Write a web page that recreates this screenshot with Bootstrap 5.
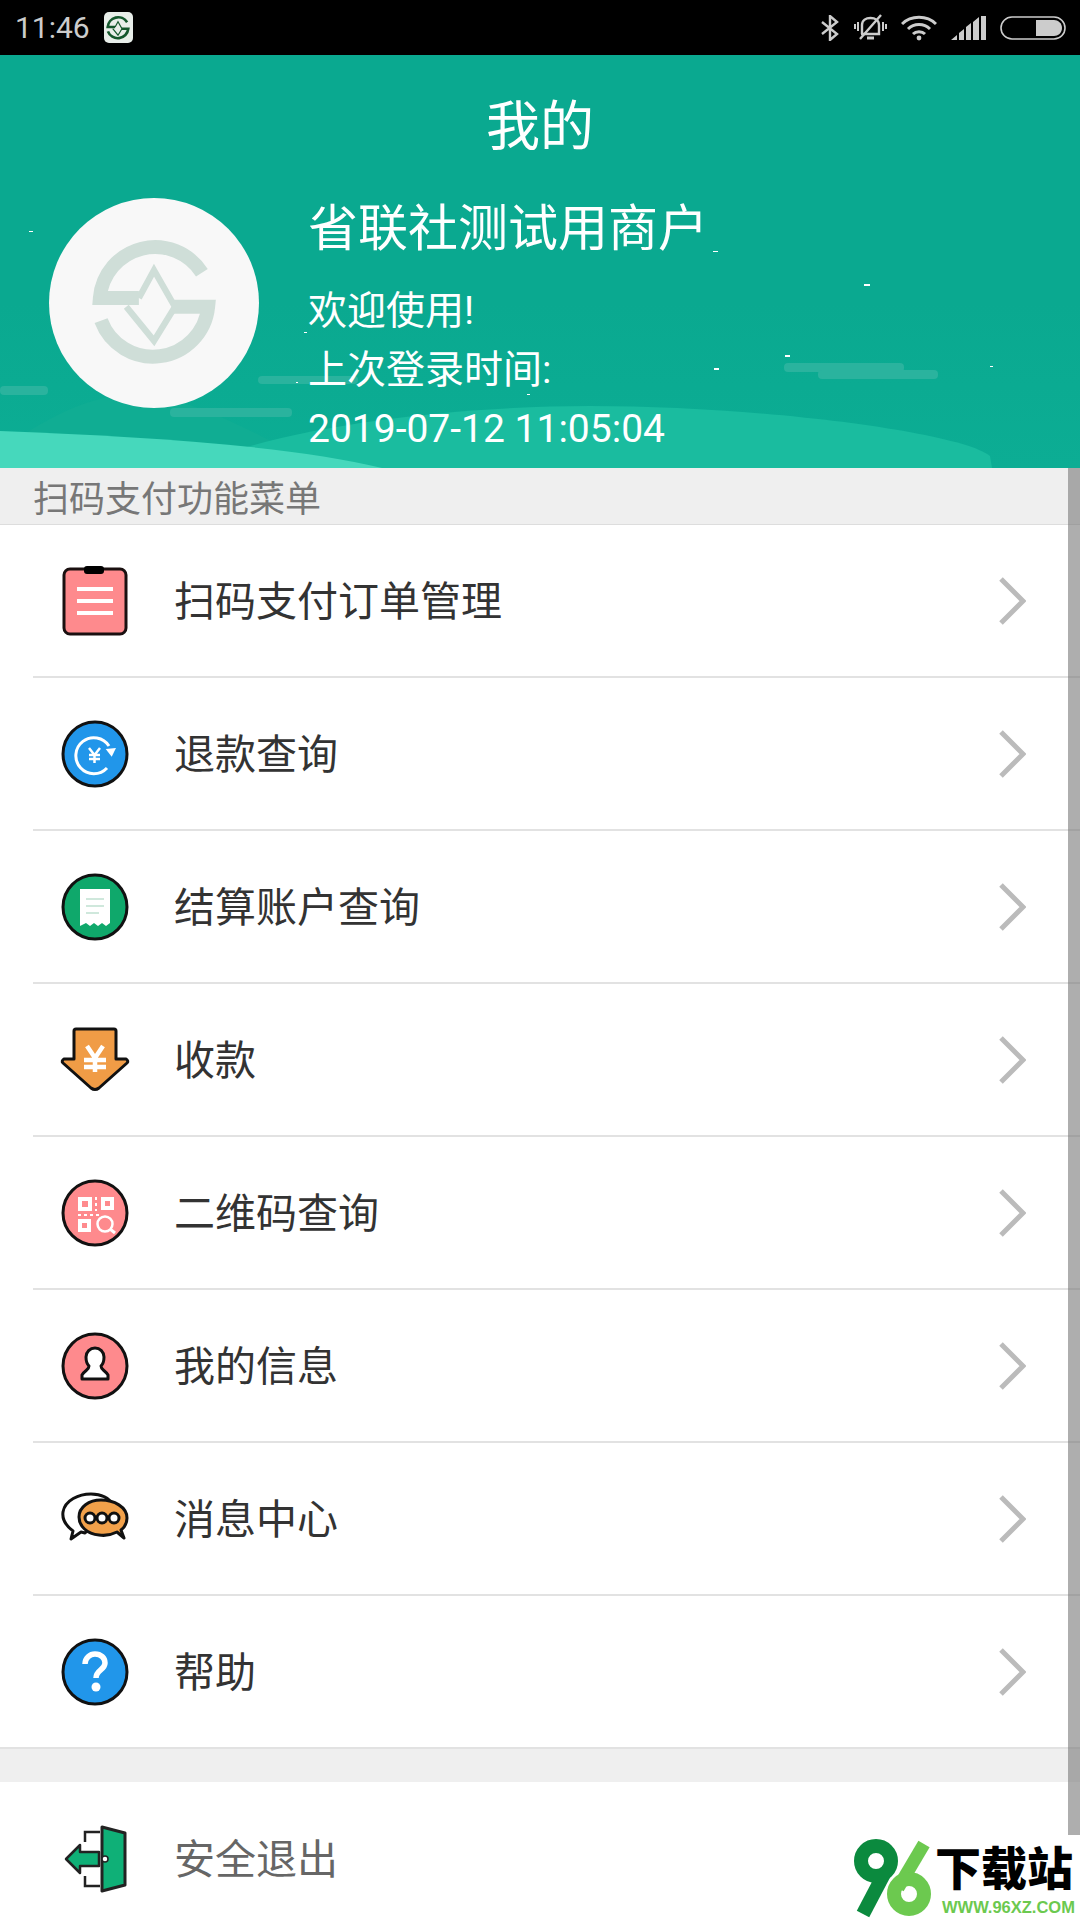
<!DOCTYPE html>
<html lang="zh-CN">
<head>
<meta charset="utf-8">
<title>我的</title>
<link rel="stylesheet" href="https://cdn.jsdelivr.net/npm/bootstrap@5.3.0/dist/css/bootstrap.min.css">
<style>
html,body{margin:0;height:1920px;overflow:hidden;background:#fff}
body{font-family:Roboto,"Noto Sans CJK SC",sans-serif;position:relative}
.status-strip{height:55px;background:#000;color:#ccc;font-size:30px;line-height:1;padding:0 14px 0 15px}
.status-strip svg{display:block}
.app-chip{width:29px;height:31px;background:#e8eee9;border-radius:5px;margin-left:14px}
.status-icons{gap:14px}
.hero{height:413px;position:relative;overflow:hidden;background:linear-gradient(#0aa990,#0aa990 60%,#0cad94);color:#fff}
.hero-art{position:absolute;left:0;top:0}
.hero-inner{position:relative}
.hero-title{font-size:54px;line-height:72px;padding-top:37px;text-align:center}
.hero-body{padding:31px 0 0 49px;gap:49px}
.avatar-disc{width:210px;height:210px;background:#f8f8f8;border-radius:50%;margin-top:3px;flex:none}
.hero-name{font-size:50px;line-height:68px;margin-bottom:19px}
.hero-line{font-size:39px;line-height:59px}
.menu-head{height:57px;background:#efefef;border-bottom:1px solid #ddd;color:#777;font-size:36px;line-height:50px;padding:7px 0 0 33px}
.menu-list{--bs-list-group-border-width:0;border-radius:0}
.menu-item{padding:0 0 0 33px;background:#fff}
.menu-row{height:153px;border-bottom:2px solid #e2e2e2;padding:0 54px 0 22px;gap:39px;color:#333;font-size:41px}
.menu-row span{padding-top:5px}
.menu-item.end-item{padding-left:0}
.menu-item.end-item .menu-row{padding-left:55px}
.exit-row{color:#666;border-bottom:0}
.menu-gap{height:33px;background:#efefef}
.menu-icon{width:80px;height:80px;flex:none;display:block}
.chev{width:28px;height:50px;display:block;flex:none}
.scroll-thumb{position:absolute;right:0;top:468px;width:12px;height:1367px;background:rgba(120,120,120,.6)}
.mark-box{position:absolute;left:850px;top:1835px;width:230px;height:85px;background:#fff}
.mark-logo{position:absolute;left:0;top:1px}
.mark-cn{position:absolute;left:85px;top:1px;font-family:"Noto Sans CJK SC",sans-serif;font-weight:900;font-size:46px;line-height:58px;color:#000;white-space:nowrap}
.mark-url{position:absolute;left:92px;top:62px;font-family:"Liberation Sans",sans-serif;font-weight:700;font-size:16.5px;line-height:20px;color:#6cc94f;white-space:nowrap}
</style>
</head>
<body>
<svg width="0" height="0" class="position-absolute">
  <defs>
    <symbol id="brand" viewBox="0 0 100 100">
      <g fill="none" stroke="currentColor">
        <path d="M88 26A44 44 0 0 0 7 46H38" stroke-width="11"/>
        <path d="M8 64A44 44 0 0 0 93 53H64" stroke-width="11"/>
        <path d="M38 46L50 24L66 52M28 53L50 80L66 54" stroke-width="5"/>
      </g>
    </symbol>
    <symbol id="chevron" viewBox="0 0 28 50">
      <path d="M3 3L25 25L3 47" fill="none" stroke="#bbb" stroke-width="5"/>
    </symbol>
  </defs>
</svg>

<div class="status-strip d-flex align-items-center">
  <span>11:46</span>
  <div class="app-chip d-flex align-items-center justify-content-center">
    <svg width="24" height="24" style="color:#14572c"><use href="#brand"/></svg>
  </div>
  <div class="status-icons d-flex align-items-center ms-auto">
    <svg width="20" height="26" viewBox="0 0 20 26" fill="none" stroke="#ccc" stroke-width="2.4"><path d="M2 7L17 19L10 25V1L17 7L2 19"/></svg>
    <svg width="33" height="30" viewBox="0 0 33 30" fill="none" stroke="#ccc" stroke-width="2.4"><path d="M8 21V12C8 7 12 5 16.500 5C21 5 25 7 25 12V21H7"/><path d="M13 25H20" stroke-width="3"/><path d="M4 9V18M1 11V16M29 9V18M32 11V16" stroke-width="2"/><path d="M6 26L27 2"/></svg>
    <svg width="36" height="26" viewBox="0 0 36 26" fill="none" stroke="#ccc" stroke-width="3"><path d="M1 9C10 0 26 0 35 9"/><path d="M7 14C13 8 23 8 29 14"/><path d="M12 19C15 16 21 16 24 19"/><circle cx="18" cy="23" r="2.4" fill="#ccc" stroke="none"/></svg>
    <svg width="35" height="24" viewBox="0 0 35 24" fill="#ccc"><path d="M0 24L6 19V24ZM8 17L13 13V24H8ZM15 11L20 7V24H15ZM22 6L28 1V24H22ZM30 0L35 0V24H30Z"/></svg>
    <svg width="66" height="24" viewBox="0 0 66 24"><rect x="1" y="1" width="64" height="22" rx="11" fill="none" stroke="#ccc" stroke-width="1.6"/><path d="M36 4H54C58 4 62 7 62 12C62 17 58 20 54 20H36Z" fill="#ccc"/></svg>
  </div>
</div>

<header class="hero">
  <svg class="hero-art" width="1080" height="413" viewBox="0 55 1080 413">
    <path d="M0 452C40 420 90 395 130 395C200 395 260 440 330 468H0Z" fill="#10ad93"/>
    <path d="M190 468C280 425 460 406 590 406C760 406 960 432 990 456L992 468Z" fill="#1abc9f"/>
    <path d="M0 431C130 436 290 445 382 468H0Z" fill="#46d8bc"/>
    <g fill="#2ab39e">
      <rect x="258" y="376" width="100" height="8" rx="4"/>
      <rect x="0" y="386" width="48" height="9" rx="4"/>
      <rect x="170" y="408" width="122" height="9" rx="4"/>
      <rect x="784" y="363" width="120" height="9" rx="4"/>
      <rect x="818" y="370" width="120" height="9" rx="4"/>
    </g>
    <g fill="#fff">
      <rect x="29" y="231" width="4" height="1"/><rect x="713" y="251" width="5" height="1"/>
      <rect x="864" y="284" width="6" height="2"/><rect x="785" y="355" width="5" height="2"/>
      <rect x="714" y="368" width="5" height="2"/><rect x="990" y="366" width="3" height="1"/>
      <rect x="304" y="332" width="3" height="1"/><rect x="296" y="382" width="2" height="1"/>
      <rect x="527" y="394" width="3" height="1"/>
    </g>
  </svg>
  <div class="hero-inner">
    <div class="hero-title">我的</div>
    <div class="hero-body d-flex align-items-start">
      <div class="avatar-disc d-flex align-items-center justify-content-center">
        <svg width="126" height="126" style="color:#cfded8"><use href="#brand"/></svg>
      </div>
      <div>
        <div class="hero-name">省联社测试用商户</div>
        <div class="hero-line">欢迎使用!</div>
        <div class="hero-line">上次登录时间:</div>
        <div class="hero-line">2019-07-12 11:05:04</div>
      </div>
    </div>
  </div>
</header>

<div class="menu-head">扫码支付功能菜单</div>

<ul class="list-group list-group-flush menu-list">
  <li class="list-group-item menu-item"><div class="menu-row d-flex align-items-center">
    <svg class="menu-icon" viewBox="0 0 80 80"><rect x="9" y="8" width="62" height="65" rx="6" fill="#fe8a8d" stroke="#1a1010" stroke-width="3"/><rect x="29" y="5" width="20" height="8" rx="3" fill="#000"/><path d="M22 28H58M22 40H58M22 52H58" stroke="#fff" stroke-width="4"/></svg>
    <span>扫码支付订单管理</span><svg class="chev ms-auto"><use href="#chevron"/></svg></div></li>

  <li class="list-group-item menu-item"><div class="menu-row d-flex align-items-center">
    <svg class="menu-icon" viewBox="0 0 80 80"><circle cx="40" cy="40" r="32" fill="#2196ea" stroke="#111" stroke-width="3"/><path d="M54 32A18 18 0 1 0 52 54" fill="none" stroke="#fff" stroke-width="3"/><path d="M50.700 35L61 34L56.700 42.700Z" fill="#fff"/><path d="M34 34L39.500 41L45 34M39.500 41V49M34 41H45M34 45H45" fill="none" stroke="#fff" stroke-width="2.500"/></svg>
    <span>退款查询</span><svg class="chev ms-auto"><use href="#chevron"/></svg></div></li>

  <li class="list-group-item menu-item"><div class="menu-row d-flex align-items-center">
    <svg class="menu-icon" viewBox="0 0 80 80"><circle cx="40" cy="40" r="32" fill="#0fa86b" stroke="#111" stroke-width="3"/><path d="M25 22H55V56L51 59L47 56L43 59L39 56L35 59L31 56L25 59Z" fill="#fff"/><path d="M31 32H49M31 39H49M31 46H44" stroke="#cfe8dc" stroke-width="2"/></svg>
    <span>结算账户查询</span><svg class="chev ms-auto"><use href="#chevron"/></svg></div></li>

  <li class="list-group-item menu-item"><div class="menu-row d-flex align-items-center">
    <svg class="menu-icon" viewBox="0 0 80 80"><path d="M21 9H59Q61 9 61 11V39H71Q74 41 72 43L44 68Q40 71 36 68L8 43Q6 41 9 39H19V11Q19 9 21 9Z" fill="#f09c46" stroke="#111" stroke-width="3" stroke-linejoin="round"/><path d="M32 26L40 38L48 26M40 38V52M29 40H51M29 47H51" fill="none" stroke="#fff" stroke-width="4.500"/></svg>
    <span>收款</span><svg class="chev ms-auto"><use href="#chevron"/></svg></div></li>

  <li class="list-group-item menu-item"><div class="menu-row d-flex align-items-center">
    <svg class="menu-icon" viewBox="0 0 80 80"><circle cx="40" cy="40" r="32" fill="#fe8a8d" stroke="#111" stroke-width="3"/><g fill="none" stroke="#fff"><rect x="25" y="26" width="10" height="10" stroke-width="4"/><rect x="48" y="26" width="9" height="9" stroke-width="4"/><rect x="25" y="48" width="9" height="9" stroke-width="4"/><circle cx="50" cy="51" r="7.500" stroke-width="2.500"/><path d="M55 56L60 60" stroke-width="3"/><path d="M41 24V38M23 42H44" stroke-width="2" stroke-dasharray="3 3"/></g></svg>
    <span>二维码查询</span><svg class="chev ms-auto"><use href="#chevron"/></svg></div></li>

  <li class="list-group-item menu-item"><div class="menu-row d-flex align-items-center">
    <svg class="menu-icon" viewBox="0 0 80 80"><circle cx="40" cy="40" r="32" fill="#fe8a8d" stroke="#111" stroke-width="3"/><path d="M27 53V49C30 44 34 44 34 40C31 37 31 33 31 31C31 26 35 22 40 22C45 22 49 26 49 31C49 33 49 37 46 40C46 44 50 44 53 49V53Z" fill="#fff" stroke="#111" stroke-width="3" stroke-linejoin="round"/></svg>
    <span>我的信息</span><svg class="chev ms-auto"><use href="#chevron"/></svg></div></li>

  <li class="list-group-item menu-item"><div class="menu-row d-flex align-items-center">
    <svg class="menu-icon" viewBox="0 0 80 80"><path d="M16 60L18 52C10 46 7 40 8 33C10 21 24 15 36 15C46 15 54 19 58 26L30 54L26 53Z" fill="#fff" stroke="#111" stroke-width="3" stroke-linejoin="round"/><path d="M69 59L62 53C56 56 50 57 44 56C32 55 24 47 24 38C24 28 34 21 46 21C59 21 72 28 72 39C72 44 70 48 66 51Z" fill="#f2a14a" stroke="#111" stroke-width="3" stroke-linejoin="round"/><g fill="#fff" stroke="#111" stroke-width="3"><circle cx="35" cy="39" r="5"/><circle cx="47" cy="39" r="5"/><circle cx="59" cy="39" r="5"/></g></svg>
    <span>消息中心</span><svg class="chev ms-auto"><use href="#chevron"/></svg></div></li>

  <li class="list-group-item menu-item end-item"><div class="menu-row d-flex align-items-center">
    <svg class="menu-icon" viewBox="0 0 80 80"><circle cx="40" cy="40" r="32" fill="#2196ea" stroke="#111" stroke-width="3"/><path d="M30 32C30 26 35 22 40 22C46 22 50 26 50 31C50 38 41 38 41 46" fill="none" stroke="#fff" stroke-width="5.500"/><circle cx="41" cy="55" r="4.500" fill="#fff"/></svg>
    <span>帮助</span><svg class="chev ms-auto"><use href="#chevron"/></svg></div></li>
</ul>

<div class="menu-gap"></div>

<div class="list-group list-group-flush menu-list">
  <div class="list-group-item menu-item"><div class="menu-row exit-row d-flex align-items-center">
    <svg class="menu-icon" viewBox="0 0 80 80"><path d="M45 13H30V23M30 57V67H45" fill="none" stroke="#222" stroke-width="2.500"/><path d="M11 40L25 26V33H44V47H25V54Z" fill="#0fb077" stroke="#222" stroke-width="2.500" stroke-linejoin="round"/><path d="M47 8L70 14V66L47 72Z" fill="#0fb077" stroke="#222" stroke-width="3" stroke-linejoin="round"/><circle cx="50" cy="40" r="3" fill="#fff" stroke="#222" stroke-width="1.500"/></svg>
    <span>安全退出</span></div></div>
</div>

<div class="scroll-thumb"></div>

<div class="mark-box">
  <svg class="mark-logo" width="84" height="84" viewBox="0 0 84 84">
    <path d="M13 78L34 38" stroke="#0b8a3e" stroke-width="14" fill="none"/>
    <circle cx="26" cy="25" r="15" fill="none" stroke="#0b8a3e" stroke-width="14"/>
    <path d="M74 8L48 52" stroke="#6cc94f" stroke-width="13" fill="none"/>
    <circle cx="59" cy="58" r="15" fill="none" stroke="#6cc94f" stroke-width="14"/>
  </svg>
  <div class="mark-cn">下载站</div>
  <div class="mark-url">WWW.96XZ.COM</div>
</div>
<script src="https://cdn.jsdelivr.net/npm/bootstrap@5.3.0/dist/js/bootstrap.bundle.min.js"></script>
</body>
</html>
